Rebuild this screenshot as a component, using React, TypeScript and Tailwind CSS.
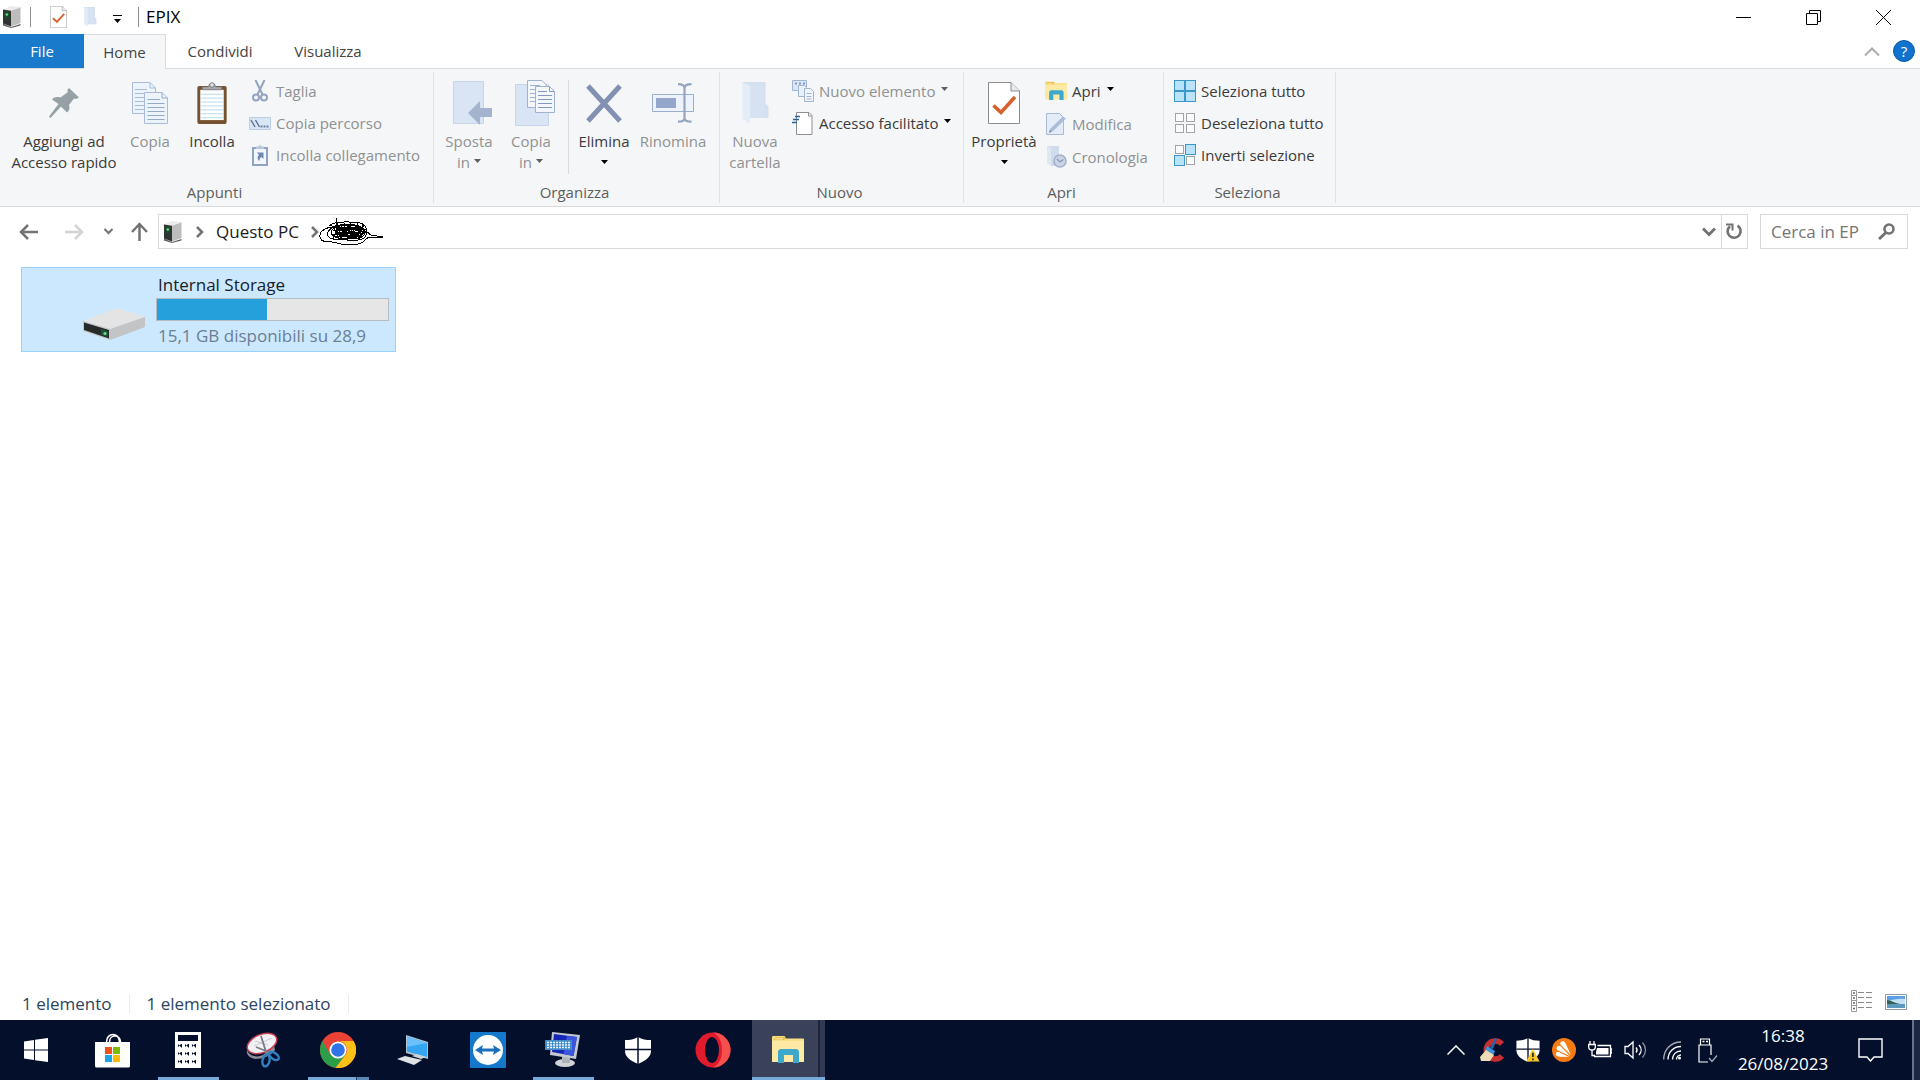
import type { ReactNode } from "react";
import clsx from "clsx";

interface BigButtonProps {
  icon: ReactNode;
  lines: string[];
  width: string;
  disabled?: boolean;
  caret?: "below" | "inline";
}

interface SmallButtonProps {
  icon: ReactNode;
  label: string;
  disabled?: boolean;
  caret?: boolean;
}

interface TaskProps {
  name: string;
  icon: ReactNode;
  running?: boolean;
}

function Caret({ className }: { className?: string }) {
  return (
    <svg viewBox="0 0 7 4" className={clsx("w-[7px] h-1 shrink-0", className)} fill="currentColor">
      <path d="M0 0h7L3.5 4z" />
    </svg>
  );
}

function TowerIcon() {
  return (
    <svg width="18" height="22" viewBox="0 0 18 22">
      <path d="M0 17.500l8 3.500 9.500-3v1.500L8 22 0 19.500z" fill="#5e5e5e" />
      <path d="M0 3.500L7.500 0 17.500 1v.8L8 5z" fill="#ececec" />
      <path d="M8 4.800l9.500-3.200V17L8 20.500z" fill="#bdbdbd" />
      <path d="M0 3.500L8 4.800v15.700L0 17.500z" fill="#303432" />
      <path d="M1.500 5l4.500.7v6.800L1.500 12z" fill="#1d4a2e" />
      <circle cx="3.800" cy="8.500" r="1.300" fill="#5de07b" />
    </svg>
  );
}

function CheckPageIcon({ className }: { className?: string }) {
  return (
    <svg viewBox="0 0 32 42" className={className}>
      <path d="M.5.5H23l8.500 8.500v32.500H.5z" fill="#fff" stroke="#8b8d90" />
      <path d="M23 .5V9h8.500" fill="#e9eaec" stroke="#8b8d90" />
      <path d="M5.500 23.500l7.500 7L27 15" fill="none" stroke="#d8602b" strokeWidth="3.600" />
    </svg>
  );
}

function PaleFolderIcon({ className }: { className?: string }) {
  return (
    <svg viewBox="0 0 27 42" className={className}>
      <path d="M1 0h23v22l3 2v12H8z" fill="#d3e0f0" />
      <path d="M1 0l8 4v35l-4 3v-3l-4-2z" fill="#e3ecf7" />
      <path d="M9 4h14v32H9z" fill="#d6e2f2" />
    </svg>
  );
}

function PinIcon() {
  return (
    <svg width="30" height="30" viewBox="0 0 30 30">
      <path d="M20 0l10 9.500-3 1.500-2-.5-5 6.500c1.200 3 .4 6-2 7.500l-6-6L1.500 30 0 28.500 9.500 16 3 11.500C5 9 8 8.500 11.500 9.500L19 4l-.8-2z" fill="#96a1a5" />
    </svg>
  );
}

function CopyIcon() {
  return (
    <svg width="36" height="42" viewBox="0 0 36 42" stroke="#a8bcda" strokeWidth="1">
      <path d="M.5.5H18l5.500 5.500v25.500H.5z" fill="#edf3fb" />
      <path d="M18 .5V6h5.500M3 7.500h12M3 11.500h17M3 15.500h17M3 19.500h17M3 23.500h17M3 27.500h17" fill="none" />
      <path d="M12.500 10.500H30l5.500 5.500v25.500h-23z" fill="#edf3fb" />
      <path d="M30 10.500V16h5.500M15.500 17.500H28M15.500 21.500h17M15.500 25.500h17M15.500 29.500h17M15.500 33.500h17M15.500 37.500h17" fill="none" stroke="#93a9cc" />
    </svg>
  );
}

function PasteIcon() {
  return (
    <svg width="30" height="42" viewBox="0 0 30 43">
      <rect x="0" y="4" width="30" height="39" rx="2" fill="#76512f" />
      <path d="M3 8h24v31H3z" fill="#fff" />
      <path d="M3 12.500h24M3 16.500h24M3 20.500h24M3 24.500h24M3 28.500h24M3 32.500h24M3 36.500h24" stroke="#b5daf0" />
      <path d="M5 8V5h6l1.500-3h5L19 5h6v3z" fill="#a5a9ac" stroke="#74787b" strokeWidth=".7" />
      <circle cx="15" cy="3" r="2.300" fill="#e8e8e8" stroke="#74787b" />
    </svg>
  );
}

function MoveIcon() {
  return (
    <svg width="48" height="45" viewBox="-8 0 48 45">
      <path d="M.5.5h30v42H.5z" fill="#d9e5f4" stroke="#c6d5e9" />
      <path d="M15 32l12-12v7h12v9H27v8z" fill="#a4b4cf" />
    </svg>
  );
}

function CopyToIcon() {
  return (
    <svg width="48" height="46" viewBox="-8 0 48 46">
      <path d="M.5 4.500h33v41H.5z" fill="#d9e5f4" stroke="#c6d5e9" />
      <g fill="#f3f6fb" stroke="#9fb2d0">
        <path d="M12.500.5H27l4 4v23H12.500z" />
        <path d="M15 5.500h10M15 9.500h6M15 13.500h6M15 17.500h6M15 21.500h6" />
        <path d="M20.500 6.500h14l5 5v21h-19z" />
        <path d="M34.500 6.500v5h5M23 11.500h9M23 15.500h14M23 19.500h14M23 23.500h14M23 27.500h14" fill="none" stroke="#8298bf" />
      </g>
    </svg>
  );
}

function DeleteIcon() {
  return (
    <svg width="36" height="39" viewBox="0 0 36 39">
      <path d="M2 2l32 35M34 2L2 37" stroke="#8290b2" strokeWidth="5" />
    </svg>
  );
}

function RenameIcon() {
  return (
    <svg width="42" height="40" viewBox="0 0 42 40">
      <path d="M.5 11.500h41v17H.5z" fill="#eef3fb" stroke="#9aaecf" />
      <path d="M4 15h20v10H4z" fill="#94a7ca" />
      <path d="M26 1.200c4 0 6.500 1 6.500 4v30c0 2.500-2.500 3.500-6.500 3.500M39.500 1.200c-4 0-7 1-7 4m7 33.500c-4 0-7-1-7-3.500" fill="none" stroke="#94a5c1" strokeWidth="2.200" />
    </svg>
  );
}

function CutIcon() {
  return (
    <svg width="16" height="22" viewBox="0 0 16 22" fill="none" stroke="#92a4c0">
      <path d="M3.500 0l7 14.500M12.500 0l-7 14.500" strokeWidth="2" />
      <circle cx="4" cy="17.500" r="3" strokeWidth="2" />
      <circle cx="12" cy="17.500" r="3" strokeWidth="2" />
    </svg>
  );
}

function PathIcon() {
  return (
    <svg width="22" height="13" viewBox="0 0 22 13">
      <path d="M.5.5h21v12H.5z" fill="#dbe6f5" stroke="#bccce3" />
      <path d="M2 3l4 7M6.500 3l4 7" stroke="#5f7498" strokeWidth="1.500" />
      <path d="M11.500 8.500h2v2h-2zM14.500 8.500h2v2h-2zM17.500 8.500h2v2h-2z" fill="#6b80a3" />
    </svg>
  );
}

function PasteLinkIcon() {
  return (
    <svg width="16" height="22" viewBox="0 0 16 22">
      <path d="M1 4h14v17H1z" fill="#f2f6fc" stroke="#8fa3c4" strokeWidth="2" />
      <path d="M4 5V2.500h2.500L8 .5l1.500 2H12V5z" fill="#b9c7dc" />
      <path d="M5 8.500h6.500V15l-2-2c-1.500.8-2 2-2 4-2.500-2-2.200-4.500-.5-6z" fill="#7188b1" />
    </svg>
  );
}

function NewItemIcon() {
  return (
    <svg width="22" height="22" viewBox="0 0 22 22" stroke="#a0b4d3">
      <path d="M.5.5h14v10H.5z" fill="#dbe6f5" />
      <path d="M3 3.500h2M7 3.500h2M11 3.500h2" stroke="#8297bb" strokeWidth="2" />
      <path d="M6.500 5.500h6l2 2v9h-8z" fill="#e9f0f9" />
      <path d="M12.500 8.500h6l3 3v10h-9z" fill="#f2f6fc" />
      <path d="M14.500 13.500h5M14.500 16.500h5M14.500 19h5" />
    </svg>
  );
}

function EasyAccessIcon() {
  return (
    <svg width="22" height="23" viewBox="0 0 22 23">
      <path d="M4.500.5H17l3 3v19H4.500z" fill="#fff" stroke="#8d8f92" />
      <path d="M16.500 .5v3.500h3.500" fill="none" stroke="#8d8f92" />
      <path d="M0 10.500h5M1 7.500h6M3 4.500h5" stroke="#2b6394" strokeWidth="1.500" />
    </svg>
  );
}

function FolderIcon({ width = 32, height = 28 }: { width?: number; height?: number }) {
  return (
    <svg width={width} height={height} viewBox="0 0 32 28">
      <path d="M0 1.500C0 .6.600 0 1.500 0h11L14 2.500h17c.6 0 1 .4 1 1V25c0 .6-.4 1-1 1H1c-.6 0-1-.4-1-1z" fill="#fbe08a" />
      <path d="M1.500 4l1.500-3h9.500l1.500 1.500L12 4z" fill="#e9bd45" />
      <path d="M3 2.800h8" stroke="#fff4c9" />
      <path d="M0 5h32v20a1 1 0 0 1-1 1H1a1 1 0 0 1-1-1z" fill="#fde9a4" />
      <path d="M6 15l2-2h17l2 2v12h-6v-8h-9v8H6z" fill="#3ba8cc" />
    </svg>
  );
}

function EditIcon() {
  return (
    <svg width="21" height="22" viewBox="0 0 21 22">
      <path d="M.5.500h13l4 4v17H.5z" fill="#e3ecf8" stroke="#a9bad5" />
      <path d="M3 20l1-4L17 3.500l3 2L7 18z" fill="#aabcd8" />
      <path d="M3 20l1-3 2 1.500z" fill="#7b8fb2" />
    </svg>
  );
}

function HistoryIcon() {
  return (
    <svg width="21" height="22" viewBox="0 0 21 22">
      <path d="M1 0h12v11l2 1v8H5z" fill="#cfdcee" />
      <path d="M1 0l4 2v18l-4-3z" fill="#dee8f5" />
      <circle cx="14" cy="15" r="6" fill="#c9d5e6" stroke="#a3b1c8" strokeWidth="1.600" />
      <path d="M11 13l3 3 3.500-2.500" fill="none" stroke="#8798b5" strokeWidth="1.300" />
    </svg>
  );
}

function TilesIcon({ filled }: { filled: boolean[] }) {
  return (
    <svg width="22" height="22" viewBox="0 0 22 22">
      {filled.map((on, i) => (
        <rect
          key={i}
          x={(i % 2) * 11 + (on ? 0.5 : 1.5)}
          y={Math.floor(i / 2) * 11 + (on ? 0.5 : 1.5)}
          width={on ? 10 : 8}
          height={on ? 10 : 8}
          fill={on ? "#b9e3fb" : "#fbfbfb"}
          stroke={on ? "#3b96cb" : "#a2a4a6"}
        />
      ))}
    </svg>
  );
}

function BigButton({ icon, lines, width, disabled, caret }: BigButtonProps) {
  return (
    <button
      disabled={disabled}
      className={clsx("flex flex-col items-center shrink-0 leading-[21px]", width, disabled ? "text-[#8f9193]" : "text-[#3b3b3b]")}
    >
      <span className="h-[46px] mb-[5px] flex items-center justify-center">{icon}</span>
      {lines.map((line, i) => (
        <span key={line} className="flex items-center whitespace-nowrap">
          {line}
          {caret === "inline" && i === lines.length - 1 && <Caret className="ml-1 mb-1 text-[#5d5f61]" />}
        </span>
      ))}
      {caret === "below" && <Caret className="mt-2 text-black" />}
    </button>
  );
}

function SmallButton({ icon, label, disabled, caret }: SmallButtonProps) {
  return (
    <button
      disabled={disabled}
      className={clsx("flex items-center h-8 whitespace-nowrap", disabled ? "text-[#8f9193]" : "text-[#3b3b3b]")}
    >
      <span className="w-[22px] mr-[5px] flex justify-center shrink-0">{icon}</span>
      {label}
      {caret && <Caret className={clsx("ml-1.5 mb-1", disabled ? "text-[#5d5f61]" : "text-black")} />}
    </button>
  );
}

function Group({ name, width, children }: { name: string; width: string; children: ReactNode }) {
  return (
    <section className={clsx("flex flex-col my-[3px] border-r border-[#e1e2e4] shrink-0", width)}>
      <div className="flex h-[110px] pt-2">{children}</div>
      <h2 className="text-center text-[#5c5e60] leading-[21px] pr-1">{name}</h2>
    </section>
  );
}

function SmallColumn({ children, className }: { children: ReactNode; className?: string }) {
  return <div className={clsx("flex flex-col items-start -mt-[5px]", className)}>{children}</div>;
}

function Ribbon() {
  return (
    <div className="flex h-[139px] bg-[#f5f6f7] border-y border-[#dadbdc] text-[15px] overflow-hidden">
      <Group name="Appunti" width="w-[434px]">
        <BigButton icon={<PinIcon />} lines={["Aggiungi ad", "Accesso rapido"]} width="w-32" />
        <BigButton icon={<CopyIcon />} lines={["Copia"]} width="w-11" disabled />
        <BigButton icon={<PasteIcon />} lines={["Incolla"]} width="w-20" />
        <SmallColumn className="-ml-[3px]">
          <SmallButton icon={<CutIcon />} label="Taglia" disabled />
          <SmallButton icon={<PathIcon />} label="Copia percorso" disabled />
          <SmallButton icon={<PasteLinkIcon />} label="Incolla collegamento" disabled />
        </SmallColumn>
      </Group>
      <Group name="Organizza" width="w-[286px]">
        <BigButton icon={<MoveIcon />} lines={["Sposta", "in"]} width="w-[70px]" disabled caret="inline" />
        <BigButton icon={<CopyToIcon />} lines={["Copia", "in"]} width="w-[54px]" disabled caret="inline" />
        <div className="w-px h-[94px] ml-[10px] bg-[#d9dadc]" />
        <BigButton icon={<DeleteIcon />} lines={["Elimina"]} width="w-[70px]" caret="below" />
        <BigButton icon={<RenameIcon />} lines={["Rinomina"]} width="w-[68px]" disabled />
      </Group>
      <Group name="Nuovo" width="w-[244px]">
        <BigButton icon={<PaleFolderIcon className="w-7 h-[42px]" />} lines={["Nuova", "cartella"]} width="w-[70px]" disabled />
        <SmallColumn className="ml-0.5">
          <SmallButton icon={<NewItemIcon />} label="Nuovo elemento" disabled caret />
          <SmallButton icon={<EasyAccessIcon />} label="Accesso facilitato" caret />
        </SmallColumn>
      </Group>
      <Group name="Apri" width="w-[200px]">
        <BigButton icon={<CheckPageIcon className="w-8 h-[42px]" />} lines={["Proprietà"]} width="w-20" caret="below" />
        <SmallColumn className="gap-px ml-px">
          <SmallButton icon={<FolderIcon width={22} height={20} />} label="Apri" caret />
          <SmallButton icon={<EditIcon />} label="Modifica" disabled />
          <SmallButton icon={<HistoryIcon />} label="Cronologia" disabled />
        </SmallColumn>
      </Group>
      <Group name="Seleziona" width="w-[172px]">
        <SmallColumn className="ml-[10px]">
          <SmallButton icon={<TilesIcon filled={[true, true, true, true]} />} label="Seleziona tutto" />
          <SmallButton icon={<TilesIcon filled={[false, false, false, false]} />} label="Deseleziona tutto" />
          <SmallButton icon={<TilesIcon filled={[false, true, true, false]} />} label="Inverti selezione" />
        </SmallColumn>
      </Group>
    </div>
  );
}

function TitleBar() {
  return (
    <header className="flex items-center h-[34px]">
      <div className="flex items-center flex-1 pl-[3px]">
        <TowerIcon />
        <div className="w-px h-5 ml-[9px] mr-[19px] bg-[#8e8e8e]" />
        <button aria-label="Proprietà">
          <CheckPageIcon className="w-[17px] h-[22px]" />
        </button>
        <button aria-label="Nuova cartella" className="ml-4">
          <PaleFolderIcon className="w-[14px] h-5" />
        </button>
        <button aria-label="Personalizza barra di accesso rapido" className="ml-4 mt-1">
          <svg width="9" height="8" viewBox="0 0 9 8">
            <path d="M0 0h9v1H0zM1 4h7L4.500 8z" />
          </svg>
        </button>
        <div className="w-px h-5 ml-4 mr-[7px] bg-[#8e8e8e]" />
        <h1 className="text-[17px] text-black">EPIX</h1>
      </div>
      <div className="flex pr-0.5">
        <button aria-label="Riduci a icona" className="w-[70px] h-[34px] flex items-center justify-center">
          <svg width="15" height="15" stroke="#000"><path d="M0 7.500h15" /></svg>
        </button>
        <button aria-label="Ripristina" className="w-[70px] h-[34px] flex items-center justify-center">
          <svg width="15" height="15" fill="none" stroke="#000"><path d="M.5 3.500h11v11H.5zM3.500 3.500v-3h11v11h-3" /></svg>
        </button>
        <button aria-label="Chiudi" className="w-[70px] h-[34px] flex items-center justify-center">
          <svg width="15" height="15" stroke="#000"><path d="M0 0l15 15M15 0L0 15" /></svg>
        </button>
      </div>
    </header>
  );
}

function Tabs() {
  return (
    <nav className="flex items-center h-[34px] text-[15px] text-[#444]">
      <button className="w-[84px] h-full bg-[#1979ca] text-white">File</button>
      <button className="w-[82px] h-[35px] -mb-px relative z-10 bg-[#f5f6f7] border-t border-r border-[#dadbdc]">Home</button>
      <button className="w-[108px] h-full">Condividi</button>
      <button className="w-[108px] h-full">Visualizza</button>
      <div className="flex items-center ml-auto pr-[5px] gap-[13px]">
        <button aria-label="Riduci barra multifunzione">
          <svg width="16" height="9" fill="none" stroke="#acacac" strokeWidth="2"><path d="M1 8.500l7-7 7 7" /></svg>
        </button>
        <button aria-label="Guida" className="w-[22px] h-[22px] rounded-full bg-[#0f72cc] border border-[#0a5ca8] text-white leading-5">?</button>
      </div>
    </nav>
  );
}

function Scribble() {
  return (
    <svg width="66" height="28" viewBox="0 0 66 28" fill="none" stroke="#000" shapeRendering="crispEdges" className="shrink-0">
      <path d="M17 0v9M13 9C5 10 0 14 1 19s6 5 12 5 8 3 14 3 14 0 17-3 4-5 8-5 5 1 7 1l5-1-12-2-4-3" />
      <path d="M10 8c6-5 14-4 20-4s14 0 16 4 3 7 0 11-9 3-18 3-17 0-19-4 2-7 5-9 15-3 22-2 11 4 10 8-6 6-14 6-20-1-20-6 9-8 16-8 18 2 17 7-8 4-15 4-13-1-14-4" />
      <path d="M12 9l31 1-29 3 34-2-35 6 33-2-30 4 28-1-22 3M12 6l8 14M18 5l5 16M25 5l4 17M31 4l3 17M38 5l2 16M44 6l-4 15M14 21l8-15M21 21l9-15M29 21l9-14M36 21l9-14M13 18l26-10M16 8l28 11M14 12l22 9M24 6l22 9" />
      <path d="M17 11h18M16 15h24M20 18h18M22 9l16 8" strokeWidth="2" />
    </svg>
  );
}

function AddressBar() {
  return (
    <div className="flex items-center h-[49px] text-[#737373] pr-3">
      <div className="flex items-center w-[158px] shrink-0 pl-[19px]">
        <button aria-label="Indietro">
          <svg width="19" height="16" fill="none" stroke="currentColor" strokeWidth="2.500"><path d="M19 8H2M9 1L2 8l7 7" /></svg>
        </button>
        <button aria-label="Avanti" disabled className="ml-[27px] text-[#d4d4d4]">
          <svg width="19" height="16" fill="none" stroke="currentColor" strokeWidth="2.500"><path d="M0 8h17M10 1l7 7-7 7" /></svg>
        </button>
        <button aria-label="Percorsi recenti" className="ml-5">
          <svg width="9" height="7" fill="none" stroke="currentColor" strokeWidth="2"><path d="M.5 1l4 4 4-4" /></svg>
        </button>
        <button aria-label="Su" className="ml-[18px]">
          <svg width="17" height="19" fill="none" stroke="currentColor" strokeWidth="2.500"><path d="M8.500 19V2M1 10l7.500-8L16 10" /></svg>
        </button>
      </div>
      <div className="flex items-center flex-1 h-[35px] border border-[#d9d9d9] text-[17px]">
        <span className="ml-[5px] mr-[14px]"><TowerIcon /></span>
        <svg width="8" height="12" fill="none" stroke="currentColor" strokeWidth="2.500"><path d="M1 1l5 5-5 5" /></svg>
        <a href="#questo-pc" className="mx-3 text-[#1c1c1c]">Questo PC</a>
        <svg width="8" height="12" fill="none" stroke="currentColor" strokeWidth="2.500" className="shrink-0"><path d="M1 1l5 5-5 5" /></svg>
        <Scribble />
        <button aria-label="Percorsi precedenti" className="ml-auto mr-[5px]">
          <svg width="14" height="10" fill="none" stroke="currentColor" strokeWidth="3"><path d="M1 1.500l6 6 6-6" /></svg>
        </button>
        <button aria-label="Aggiorna" className="w-[26px] h-full border-l border-[#d9d9d9] flex items-center justify-center">
          <svg width="17" height="17" viewBox="0 0 17 17" fill="none" stroke="currentColor" strokeWidth="2.600">
            <path d="M11.500 2.700a6.500 6.500 0 1 1-7.500.5" />
            <path d="M0 1.500h6.500v6" strokeWidth="2" />
          </svg>
        </button>
      </div>
      <div className="flex items-center w-[148px] h-[35px] ml-3 border border-[#d9d9d9]">
        <input aria-label="Cerca" placeholder="Cerca in EP" className="min-w-0 flex-1 pl-[10px] text-[17px] outline-none placeholder:text-[#757575]" />
        <button aria-label="Avvia ricerca" className="mx-3">
          <svg width="17" height="17" fill="none" stroke="currentColor">
            <circle cx="11" cy="6" r="4.500" strokeWidth="2.600" />
            <path d="M8 9.500L1 16" strokeWidth="3" />
          </svg>
        </button>
      </div>
    </div>
  );
}

function DriveIcon() {
  return (
    <svg width="62" height="34" viewBox="0 0 62 34">
      <path d="M0 13L31 1c2-.8 4-.8 6-.3L62 9 27 21z" fill="#e4e4e4" />
      <path d="M27 21L62 9v10L30 31l-3 1z" fill="#c3c4c5" />
      <path d="M0 13l27 8v11L0 23z" fill="#c4c6c7" />
      <path d="M1 14.500l25 7.500v8.500L1 22z" fill="#262b29" />
      <path d="M18 21l7 2v6l-7-2z" fill="#1f5136" />
      <circle cx="22" cy="25.500" r="1.600" fill="#65e08a" />
    </svg>
  );
}

function Content() {
  return (
    <main className="flex-1 px-[21px] pt-[11px]">
      <button className="flex w-[375px] h-[85px] bg-[#cce8ff] border border-[#99d1ff] text-left text-[17px]">
        <span className="w-[134px] shrink-0 pl-[61px] pt-10"><DriveIcon /></span>
        <span className="flex-1 flex flex-col pt-1.5 pr-1.5">
          <span className="pl-0.5 leading-[22px] text-[#16202a]">Internal Storage</span>
          <span role="progressbar" aria-label="Spazio usato" aria-valuenow={47} className="block h-[23px] my-0.5 border border-[#b5bcc4] bg-[#e6e6e6]">
            <span className="block h-full bg-[#26a0da]" style={{ width: "47.5%" }} />
          </span>
          <span className="pl-0.5 mt-0.5 leading-[22px] text-[#6a7f91] whitespace-nowrap">15,1 GB disponibili su 28,9</span>
        </span>
      </button>
    </main>
  );
}

function StatusBar() {
  return (
    <footer className="flex items-center h-8 pl-[22px] pr-[13px] text-[17px] text-[#2b445e]">
      <span className="pr-[17px] border-r border-[#ececec] leading-5">1 elemento</span>
      <span className="px-[17px] border-r border-[#ececec] leading-5">1 elemento selezionato</span>
      <div className="flex items-start gap-3 ml-auto self-start pt-0.5">
        <button aria-label="Dettagli">
          <svg width="22" height="22" viewBox="0 0 22 22" fill="none" stroke="#868686">
            <path d="M.5.5h5v21h-5zM.5 5.500h5M.5 10.500h5M.5 15.500h5" stroke="#9a9a9a" />
            <path d="M2 3h2M2 8h2M2 13h2M2 18.500h2" stroke="#666" strokeWidth="1.500" />
            <path d="M7 2.500h6M15 2.500h6M7 7.500h6M15 7.500h6M7 12.500h6M15 12.500h6M7 17.500h6M15 17.500h6" />
          </svg>
        </button>
        <button aria-label="Icone grandi" className="mt-1">
          <svg width="22" height="16" viewBox="0 0 22 16">
            <path d="M.5.5h21v15H.5z" fill="#fff" stroke="#8c9bab" />
            <path d="M2 2h18v12H2z" fill="#c3e0f5" />
            <path d="M2 2h18v3c-6-1-12 1-18 2z" fill="#5c9fe2" />
            <path d="M2 6c4 0 7 3 13 4H2z" fill="#2f6253" />
            <path d="M2 10h18v4H2z" fill="#5d99bd" />
          </svg>
        </button>
      </div>
    </footer>
  );
}

const shieldPath = "M13 0c4 2.500 8 3 13 3v11c0 6-6 10-13 13C6 24 0 20 0 14V3c5 0 9-.5 13-3z";

const tasks: TaskProps[] = [
  {
    name: "Microsoft Store",
    icon: (
      <svg width="35" height="35" viewBox="0 0 35 35">
        <path d="M11.500 9c0-10 13-10 13 0M14.500 9c0-8 11-8 11 0" fill="none" stroke="#fff" strokeWidth="1.600" />
        <path d="M0 9h35v24a1.500 1.500 0 0 1-1.500 1.500h-32A1.500 1.500 0 0 1 0 33z" fill="#fff" />
        <path d="M10 14h7v7h-7z" fill="#f1511b" />
        <path d="M18 14h7v7h-7z" fill="#80bb03" />
        <path d="M10 22h7v7h-7z" fill="#1ba4e6" />
        <path d="M18 22h7v7h-7z" fill="#fbbc09" />
      </svg>
    ),
  },
  {
    name: "Calcolatrice",
    running: true,
    icon: (
      <svg width="26" height="36" viewBox="0 0 26 36">
        <path d="M0 0h26v36H0z" fill="#fff" />
        <path d="M3 3h20v6H3z" fill="#04102b" />
        {[12, 20, 28].map((y) =>
          [3, 10, 17].map((x) => <path key={`${x}-${y}`} d={`M${x} ${y}h4v4z M${x} ${y}v3l3-3z`} fill="#04102b" />)
        )}
      </svg>
    ),
  },
  {
    name: "Strumento di cattura",
    icon: (
      <svg width="36" height="36" viewBox="0 0 36 36">
        <path d="M2 18c2 6 10 8 16 5l11-10 1 5c-4 6-13 9-20 9-5-1-9-4-8-9z" fill="#8c8c96" />
        <ellipse cx="17" cy="11.500" rx="15.500" ry="9" transform="rotate(-22 17 11.500)" fill="#f3f1f3" stroke="#c63f50" strokeWidth="1.500" />
        <path d="M9 14l18-8M10 9l13 4" stroke="#c9c9cf" />
        <path d="M16 4l6 19M11 15l15 6" stroke="#777d88" strokeWidth="1.800" />
        <g fill="none" stroke="#2f80c4" strokeWidth="2.400">
          <ellipse cx="21" cy="28.500" rx="3.500" ry="6" transform="rotate(12 21 28.500)" />
          <ellipse cx="29" cy="24" rx="3" ry="5.500" transform="rotate(-55 29 24)" />
        </g>
      </svg>
    ),
  },
  {
    name: "Google Chrome",
    running: true,
    icon: (
      <svg width="36" height="36" viewBox="0 0 36 36">
        <circle cx="18" cy="18" r="18" fill="#ea4335" />
        <path d="M2.400 9a18 18 0 0 0 13.200 26.850L25.800 22.500 18 26l-7.800-3.500z" fill="#2a9e48" />
        <path d="M18 9h15.600A18 18 0 0 1 15.600 35.850L25.800 22.500A9 9 0 0 0 18 9z" fill="#fbc116" />
        <circle cx="18" cy="18" r="8.600" fill="#fff" />
        <circle cx="18" cy="18" r="6.800" fill="#2f74e6" />
      </svg>
    ),
  },
  {
    name: "Questo PC",
    icon: (
      <svg width="32" height="32" viewBox="0 0 32 32">
        <path d="M9 1l22 7v17L9 19z" fill="#b4c4cf" />
        <path d="M10 2.500L30 9v14L10 17.500z" fill="#33a5f1" />
        <path d="M10 2.500L30 9l-20 4z" fill="#68c1fb" />
        <path d="M15 22l5-2 9 3-5 2z" fill="#ccd3d8" />
        <path d="M0 25l8-3 17 4-8 5z" fill="#dfe3e6" />
      </svg>
    ),
  },
  {
    name: "TeamViewer",
    icon: (
      <svg width="36" height="36" viewBox="0 0 36 36">
        <rect width="36" height="36" rx="1" fill="#1478cb" />
        <circle cx="18" cy="18" r="15" fill="#fff" />
        <path d="M5 18l8-5-1 3.500h12L23 13l8 5-8 5 1-3.500H12l1 3.500z" fill="#1c70b9" />
      </svg>
    ),
  },
  {
    name: "Tastiera su schermo",
    running: true,
    icon: (
      <svg width="36" height="36" viewBox="0 0 36 36">
        <ellipse cx="20" cy="31" rx="10" ry="4" fill="#d1d3d7" />
        <path d="M17 24h8v7h-8z" fill="#aeb2b9" />
        <path d="M7 0l28 3-4 24L5 23z" fill="#c4c8cf" />
        <path d="M9 2l23 3-3.500 19L7 20z" fill="#1727b5" />
        <path d="M22 4l10 1-3.500 19-10-2z" fill="#3b56dc" />
        <path d="M0 8h27v10H0z" fill="#418cc8" />
        <path d="M2 10.500h23M2 13h23M2 15.500h23" stroke="#eef6fd" strokeWidth="1.500" strokeDasharray="2 1" />
      </svg>
    ),
  },
  {
    name: "Sicurezza di Windows",
    icon: (
      <svg width="26" height="27" viewBox="0 0 26 27">
        <path d={shieldPath} fill="#fff" />
        <path d="M13 0v27M0 12.500h26" stroke="#04102b" strokeWidth="1.500" />
      </svg>
    ),
  },
  {
    name: "Opera",
    icon: (
      <svg width="36" height="36" viewBox="0 0 36 36">
        <circle cx="18" cy="18" r="17.500" fill="#e21b2c" />
        <path d="M18 .5a17.500 17.500 0 0 1 0 35c5-2 9-8 9-17.500S23 2.500 18 .5z" fill="#f5504b" />
        <ellipse cx="17" cy="18" rx="7" ry="13" fill="#04102b" />
      </svg>
    ),
  },
];

function Taskbar() {
  return (
    <div className="flex h-[60px] bg-[#04102b] text-white">
      <button aria-label="Start" className="w-[75px] pr-[3px] flex items-center justify-center">
        <svg width="24" height="24" viewBox="0 0 24 24" fill="#fff">
          <path d="M0 3.500L10 2v9.500H0zM11 1.800L24 0v11.500H11zM0 12.500h10V22L0 20.500zM11 12.500h13V24l-13-1.800z" />
        </svg>
      </button>
      {tasks.map((task) => (
        <button key={task.name} aria-label={task.name} className="relative w-[75px] flex items-center justify-center">
          {task.icon}
          {task.running && (
            <span className="absolute bottom-0 left-2 flex w-[61px] h-[3px] bg-[#76aad9]">
              {task.name === "Google Chrome" && <span className="ml-auto w-[13px] bg-[#5a87b3] border-l border-[#22406a]" />}
            </span>
          )}
        </button>
      ))}
      <button aria-label="Esplora file" className="flex w-[73px] ml-0.5 bg-[#3a4259] border-b-3 border-[#76aad9]">
        <span className="flex-1 h-full pl-1.5 pt-0.5 flex items-center justify-center"><FolderIcon /></span>
        <span className="w-[7px] h-full bg-[#313a52] border-l-2 border-[#1c2440]" />
      </button>

      <div className="flex ml-auto">
        <button aria-label="Mostra icone nascoste" className="w-9 flex items-center justify-center">
          <svg width="18" height="10" fill="none" stroke="#fff" strokeWidth="1.500"><path d="M.5 9.500L9 1l8.500 8.500" /></svg>
        </button>
        <button aria-label="CCleaner" className="w-9 flex items-center justify-center">
          <svg width="24" height="24" viewBox="0 0 24 24">
            <path d="M22 6A9 9 0 1 0 22 18" fill="none" stroke="#c73030" strokeWidth="5.500" />
            <path d="M15 0l2 1-4 10-3-1z" fill="#2a62a8" />
            <path d="M7 8l8 5-2 5-8-5z" fill="#3f93d6" />
            <path d="M6 12l8 5-4 6H1l-1-4z" fill="#eddcb5" />
          </svg>
        </button>
        <button aria-label="Sicurezza di Windows" className="w-9 flex items-center justify-center">
          <svg width="24" height="24" viewBox="0 0 26 27">
            <path d={shieldPath} fill="#fff" />
            <path d="M13 0v27M0 12.500h26" stroke="#04102b" strokeWidth="1.500" />
            <path d="M18.500 12L26 26.500H11z" fill="#f8c725" />
            <path d="M18.500 16.500v5M18.500 23v2" stroke="#222" strokeWidth="1.800" />
          </svg>
        </button>
        <button aria-label="Avast" className="w-9 flex items-center justify-center">
          <svg width="24" height="24" viewBox="0 0 24 24">
            <circle cx="12" cy="12" r="12" fill="#f57c14" />
            <path d="M9 4c1.500-1.500 3.500-.8 4.200.8L19 17 8.500 6.500C8 5.600 8.200 4.600 9 4zM5.200 8.500c1.200-1.200 2.600-1 3.600 0L18 18 6 12.500c-1.500-.8-2-2.500-.8-4zM4 15c.8-1 2-1.200 3.200-.8L17 19l-9.500-.3C5 18.500 3.200 16.800 4 15z" fill="#fff" />
          </svg>
        </button>
        <button aria-label="Batteria" className="w-9 flex items-center justify-center">
          <svg width="24" height="18" viewBox="0 0 24 18" fill="none" stroke="#fff">
            <path d="M9.500 4.500h13v11H6.500V14M22.500 8h1.500v4h-1.500" strokeWidth="1.300" />
            <path d="M9 7h11.500v6.500H8V11z" fill="#fff" stroke="none" />
            <path d="M2 0v3M6 0v3M.7 3.500h6.600V6c0 2-1 3-3.300 3S.7 8 .7 6zM4 9v5.500h3" strokeWidth="1.300" />
          </svg>
        </button>
        <button aria-label="Volume" className="w-9 flex items-center justify-center">
          <svg width="24" height="20" viewBox="0 0 24 20" fill="none" stroke="#fff" strokeWidth="1.300">
            <path d="M1 6.500h3L9 2v16l-5-4.500H1z" />
            <path d="M12 7.500c1.300 1.500 1.300 3.500 0 5M15 5c2.800 3 2.800 7 0 10" />
            <path d="M18.500 2.500c4 4.500 4 10.500 0 15" stroke="#8a91a1" />
          </svg>
        </button>
        <button aria-label="Rete" className="w-9 flex items-center justify-center">
          <svg width="19" height="19" viewBox="0 0 19 19" fill="none" stroke="#fff" strokeWidth="1.300">
            <path d="M.7 18.500C.7 8.500 8 1 18 1" stroke="#a7adb9" />
            <path d="M5 18.500C5 11 10.500 5.500 18 5.500M9.500 18.500c0-5 3.500-8.500 8.500-8.500M13.500 18.500c0-2.500 2-4.500 4.500-4.500" />
            <circle cx="16.500" cy="17" r="1.500" fill="#fff" stroke="none" />
          </svg>
        </button>
        <button aria-label="Rimozione sicura dell'hardware" className="w-9 flex items-center justify-center">
          <svg width="20" height="25" viewBox="0 0 20 25" fill="none" stroke="#fff" strokeWidth="1.200">
            <path d="M2.500 7V1h9v6M10 24H1V7h12v10" />
            <path d="M4.500 3.500h2M8 3.500h2" strokeWidth="1.500" />
            <path d="M11 20l3 3.500 5-6" stroke="#a7adb9" />
          </svg>
        </button>
        <button className="w-[114px] flex flex-col items-center justify-center text-[17px] leading-7">
          <time>16:38</time>
          <time>26/08/2023</time>
        </button>
        <button aria-label="Notifiche" className="w-[60px] flex items-center justify-center">
          <svg width="25" height="24" fill="none" stroke="#fff" strokeWidth="1.400"><path d="M1 1h23v18h-8l-3.500 4L9 19H1z" /></svg>
        </button>
        <button aria-label="Mostra desktop" className="w-2 ml-3 bg-[#1c2744] border-l-2 border-[#69728a]" />
      </div>
    </div>
  );
}

function App() {
  return (
    <div className="min-h-screen flex flex-col bg-white font-['Open_Sans','Noto_Sans',sans-serif]">
      <TitleBar />
      <Tabs />
      <Ribbon />
      <AddressBar />
      <Content />
      <StatusBar />
      <Taskbar />
    </div>
  );
}

export default App;
